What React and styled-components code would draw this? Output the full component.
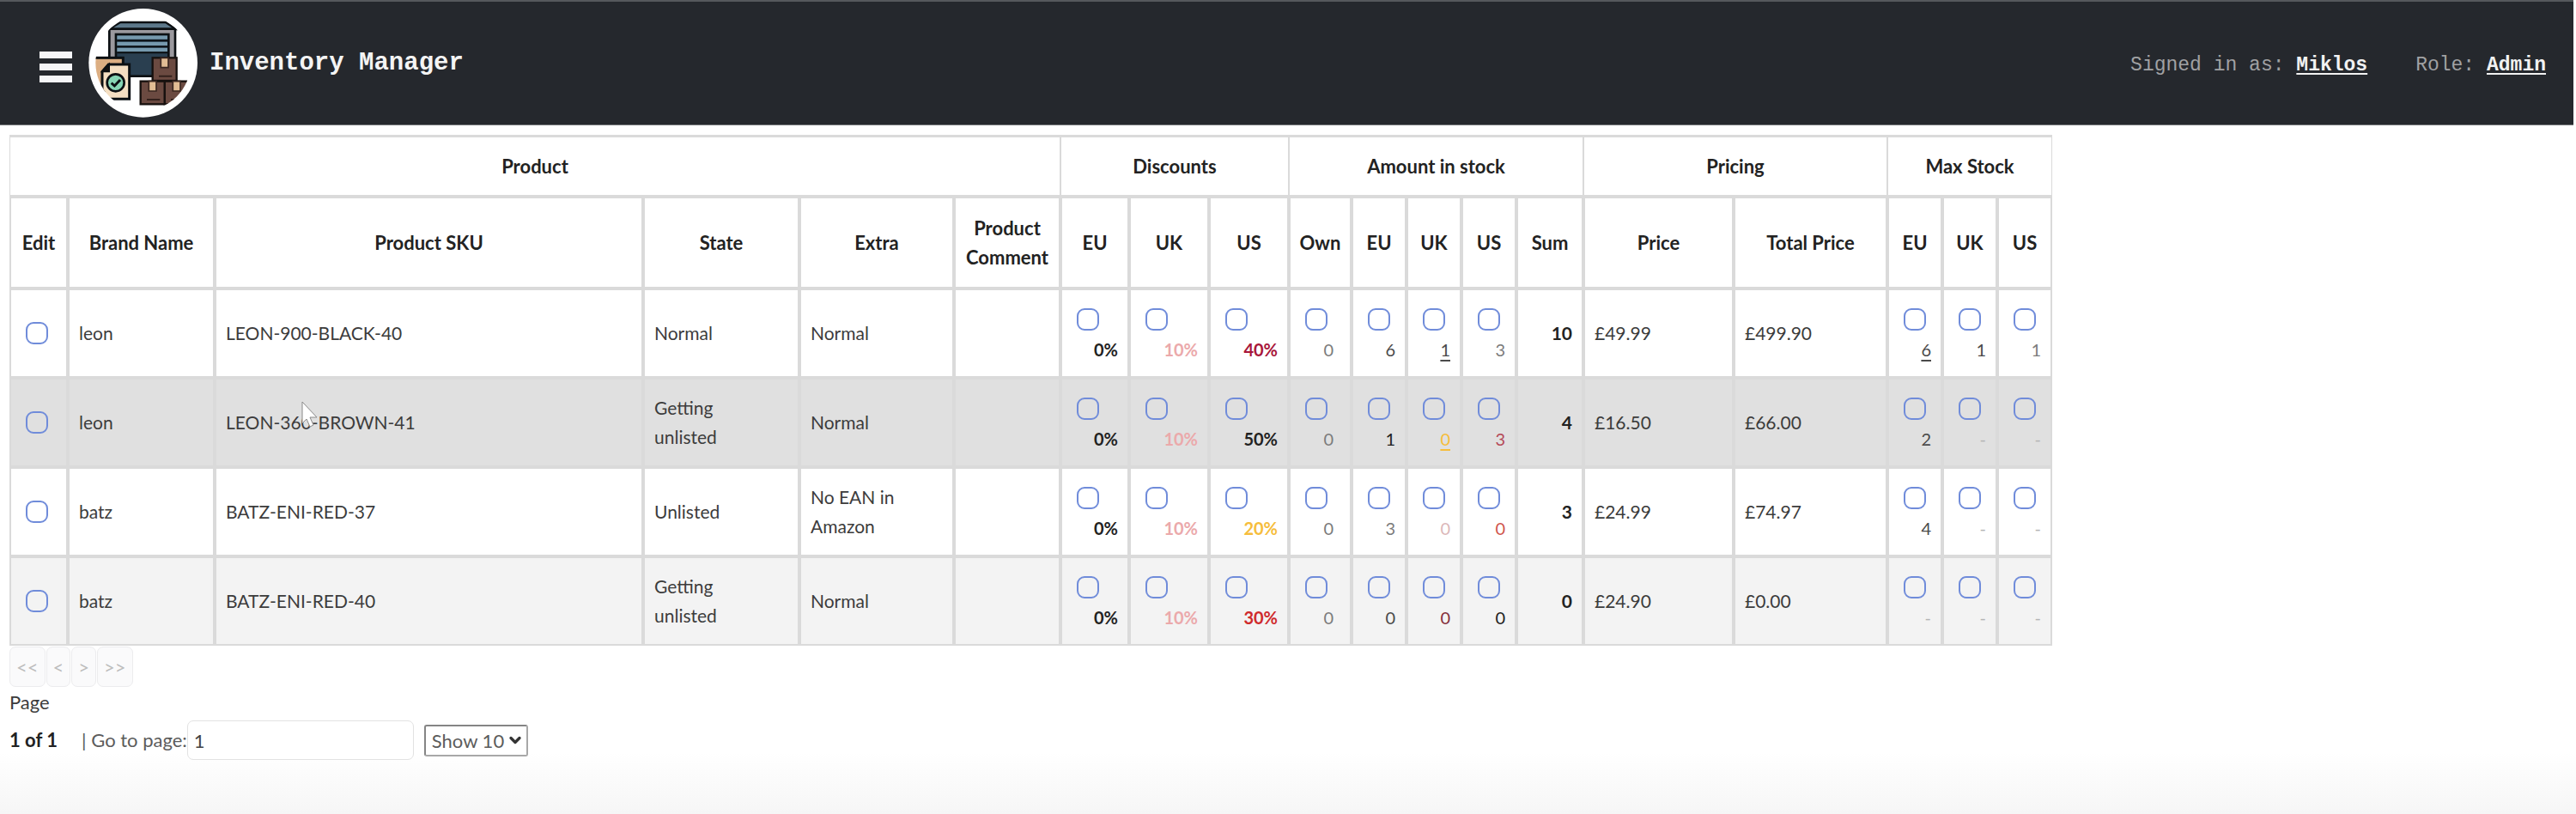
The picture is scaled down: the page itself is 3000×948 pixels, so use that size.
import React from "react";
import styled, { createGlobalStyle, css } from "styled-components";
import { ChevronDown } from "lucide-react";

const LINE = "#dadada";

const GlobalStyle = createGlobalStyle`
  *, *::before, *::after { box-sizing: border-box; }
  body {
    margin: 0;
    color: #3c3c3c;
    font-family: Lato, "Liberation Sans", sans-serif;
    font-size: 22px;
    line-height: 34px;
  }
`;

const Page = styled.div`
  min-height: 100vh;
  background: linear-gradient(to top, #f6f6f6 0, #fff 72px);
`;

const Header = styled.header`
  display: flex;
  align-items: center;
  height: 146px;
  margin-right: 3px;
  padding: 0 32px 0 46px;
  background: #25282d;
  border-top: 2px solid #55585c;
  border-bottom: 1px solid #77797c;
  font-family: "Liberation Mono", monospace;
`;

const MenuButton = styled.button`
  display: grid;
  gap: 6px;
  width: 38px;
  margin-top: 8px;
  padding: 0;
  border: 0;
  background: none;
`;

const MenuBar = styled.span`
  height: 8px;
  background: #f6f6f8;
`;

const Brand = styled.h1`
  display: flex;
  align-items: center;
  gap: 14px;
  margin: 0 auto 0 19px;
  color: #f4f4f4;
  font-size: 29px;
  font-weight: 700;
`;

const Session = styled.div`
  display: flex;
  gap: 56px;
  margin-top: 4px;
  color: #a0a1a3;
  font-size: 23px;
`;

const SessionLink = styled.a`
  color: #f2f2f2;
  font-weight: 700;
  text-decoration: underline;
  text-decoration-thickness: 2px;
  text-underline-offset: 3px;
`;

const Content = styled.main`
  padding: 11px 11px 0;
`;

const Table = styled.table`
  width: max-content;
  table-layout: fixed;
  border-collapse: separate;
  border-spacing: 0;
  border-top: 1px solid ${LINE};
  font-size: 21px;
`;

const Col = styled.col`
  width: ${(p) => p.$w}px;
`;

const HeadCell = styled.th`
  height: ${(p) => (p.$group ? 71 : 107)}px;
  padding: 0 4px;
  border: 2px solid ${LINE};
  ${(p) => p.$group && css`border-left-width: 1px; border-right-width: 1px;`}
  color: #222;
  font-size: 22px;
  font-weight: 700;
`;

const Row = styled.tr`
  background: ${(p) => ({ hover: "#e0e0e0", even: "#f3f3f3" })[p.$tone] || "#fff"};
`;

const Cell = styled.td`
  position: relative;
  height: 104px;
  padding: 0 11px;
  border: 2px solid ${LINE};
  white-space: pre-line;
`;

const SumCell = styled(Cell)`
  color: #222;
  font-weight: 700;
  text-align: right;
`;

const Check = styled.input.attrs({ type: "checkbox" })`
  appearance: none;
  display: block;
  width: 26px;
  height: 26px;
  margin: 0 6px;
  border: 2px solid #708cda;
  border-radius: 9px;
`;

const Figure = styled.div`
  display: grid;
  gap: 8px;
  padding: 4px 0 0;
`;

const Value = styled.span`
  padding-right: ${(p) => (p.$inset ? 8 : 0)}px;
  color: ${(p) => p.$color};
  font-size: 20px;
  font-weight: ${(p) => (p.$bold ? 700 : 400)};
  line-height: 28px;
  text-align: right;
  text-decoration: ${(p) => (p.$under ? "underline" : "none")};
  text-underline-offset: 4px;
`;

const Pointer = styled.svg`
  position: absolute;
  left: 99px;
  top: 25px;
  width: 20px;
  height: 32px;
`;

const Pager = styled.nav`
  display: flex;
  gap: 1px;
  padding: 1px 0;
`;

const PagerButton = styled.button`
  height: 47px;
  padding: 0 7px;
  border: 1px solid #ececee;
  border-radius: 7px;
  background: #fafafb;
  color: #bdbdbd;
  font: inherit;
`;

const PageLine = styled.div`
  display: flex;
  align-items: center;
  padding-top: 4px;
`;

const PageCount = styled.strong`
  margin-right: 28px;
  color: #222;
`;

const PageLabel = styled.label`
  display: flex;
  align-items: center;
  color: #5c5c5c;
`;

const PageInput = styled.input`
  width: 264px;
  height: 46px;
  margin-right: 12px;
  padding: 0 7px;
  border: 1px solid #e2e2e2;
  border-radius: 7px;
  background: #fff;
  color: #444;
  font: inherit;
`;

const SelectBox = styled.div`
  display: grid;
  align-items: center;
  > * { grid-area: 1 / 1; }
  > svg { justify-self: end; margin-right: 5px; pointer-events: none; }
`;

const Select = styled.select`
  appearance: none;
  width: 121px;
  height: 37px;
  padding: 0 7px;
  border: 2px solid #858585;
  border-right-color: #a8a8a8;
  border-bottom-color: #a8a8a8;
  border-radius: 3px;
  background: #fff;
  color: #5c5c5c;
  font: inherit;
`;

function Box({ x, y }) {
  return (
    <g stroke="#17110f" strokeWidth="7">
      <rect x={x} y={y} width="84" height="80" fill="#6b4a41" />
      <path d={`M${x + 29} ${y}v34h26v-34z`} fill="#e2bd94" stroke="#3a2721" strokeWidth="5" />
      <path d={`M${x + 22} ${y + 64}h46`} stroke="#33211c" strokeWidth="6" />
    </g>
  );
}

function Logo() {
  return (
    <svg width="127" height="127" viewBox="40 30 381 381" aria-hidden="true">
      <defs>
        <clipPath id="badge"><circle cx="231" cy="220" r="166" /></clipPath>
      </defs>
      <circle cx="231" cy="220" r="190" fill="#fff" />
      <g clipPath="url(#badge)" stroke="#0c1013">
        <path d="M110 102L150 78H310L346 102z" fill="#5c788a" strokeWidth="8" />
        <rect x="113" y="101" width="230" height="165" fill="#9b999e" strokeWidth="8" />
        <rect x="136" y="120" width="184" height="146" fill="#2a3f50" strokeWidth="8" />
        <path d="M140 131H316M140 153H316M140 174H316" stroke="#7699ad" strokeWidth="13" />
        <path d="M140 142H316M140 163H316M140 184H316" strokeWidth="6" />
        <rect x="50" y="202" width="111" height="115" fill="#dcae82" strokeWidth="9" />
        <path d="M110 225H183V346H88V250z" fill="#f5dfc2" strokeWidth="9" />
        <path d="M112 225V250H88z" fill="#17110f" strokeWidth="6" />
        <circle cx="135" cy="289" r="30" fill="#86d5b4" strokeWidth="8" />
        <path d="M120 290L131 300L151 279" fill="none" strokeWidth="9" />
        <Box x={264} y={202} />
        <Box x={306} y={284} />
        <Box x={222} y={284} />
      </g>
    </svg>
  );
}

const WIDTHS = [68, 171, 499, 182, 180, 124, 80, 93, 93, 73, 64, 64, 63, 78, 175, 179, 64, 64, 63];

const GROUPS = [
  ["Product", 6],
  ["Discounts", 3],
  ["Amount in stock", 5],
  ["Pricing", 2],
  ["Max Stock", 3],
];

const COLUMNS = [
  "Edit", "Brand Name", "Product SKU", "State", "Extra", "Product Comment",
  "EU", "UK", "US", "Own", "EU", "UK", "US", "Sum", "Price", "Total Price", "EU", "UK", "US",
];

const INK = "#222";
const GREY = "#7c7c7c";
const DARK = "#4a4a4a";
const FAINT = "#b4b4b4";
const PINK = "#eba9ab";
const AMBER = "#f6bd3c";

const v = (text, color, under = false) => ({ text, color, under });

const ROWS = [
  {
    brand: "leon", sku: "LEON-900-BLACK-40", state: "Normal", extra: "Normal",
    discounts: [v("0%", INK), v("10%", PINK), v("40%", "#a8163a")],
    stock: [v("0", GREY), v("6", DARK), v("1", DARK, true), v("3", GREY)],
    sum: 10, price: "£49.99", total: "£499.90",
    max: [v("6", DARK, true), v("1", DARK), v("1", GREY)],
  },
  {
    brand: "leon", sku: "LEON-360-BROWN-41", state: "Getting\nunlisted", extra: "Normal", tone: "hover",
    discounts: [v("0%", INK), v("10%", PINK), v("50%", INK)],
    stock: [v("0", GREY), v("1", INK), v("0", AMBER, true), v("3", "#b54a58")],
    sum: 4, price: "£16.50", total: "£66.00",
    max: [v("2", DARK), v("-", FAINT), v("-", FAINT)],
  },
  {
    brand: "batz", sku: "BATZ-ENI-RED-37", state: "Unlisted", extra: "No EAN in\nAmazon",
    discounts: [v("0%", INK), v("10%", PINK), v("20%", AMBER)],
    stock: [v("0", GREY), v("3", GREY), v("0", "#dcb8ba"), v("0", "#d0564e")],
    sum: 3, price: "£24.99", total: "£74.97",
    max: [v("4", DARK), v("-", FAINT), v("-", FAINT)],
  },
  {
    brand: "batz", sku: "BATZ-ENI-RED-40", state: "Getting\nunlisted", extra: "Normal", tone: "even",
    discounts: [v("0%", INK), v("10%", PINK), v("30%", "#cf2a2c")],
    stock: [v("0", GREY), v("0", DARK), v("0", "#86303c"), v("0", INK)],
    sum: 0, price: "£24.90", total: "£0.00",
    max: [v("-", FAINT), v("-", FAINT), v("-", FAINT)],
  },
];

function FigureCell({ item, label, bold, inset }) {
  return (
    <Cell>
      <Figure>
        <Check aria-label={label} />
        <Value $color={item.color} $under={item.under} $bold={bold} $inset={inset}>{item.text}</Value>
      </Figure>
    </Cell>
  );
}

function ProductRow({ row }) {
  return (
    <Row $tone={row.tone}>
      <Cell><Check aria-label={`Edit ${row.sku}`} /></Cell>
      <Cell>{row.brand}</Cell>
      <Cell>
        {row.sku}
        {row.tone === "hover" && (
          <Pointer viewBox="0 0 20 32" aria-hidden="true">
            <path d="M1 1V26L6 21L10 30L14 28L10 19H18z" fill="#fff" stroke="#8a8a8a" />
          </Pointer>
        )}
      </Cell>
      <Cell>{row.state}</Cell>
      <Cell>{row.extra}</Cell>
      <Cell />
      {row.discounts.map((d, i) => <FigureCell key={i} item={d} bold label={`Discount ${i + 1}, ${row.sku}`} />)}
      {row.stock.map((s, i) => <FigureCell key={i} item={s} inset={i === 0} label={`Stock ${i + 1}, ${row.sku}`} />)}
      <SumCell>{row.sum}</SumCell>
      <Cell>{row.price}</Cell>
      <Cell>{row.total}</Cell>
      {row.max.map((m, i) => <FigureCell key={i} item={m} label={`Max stock ${i + 1}, ${row.sku}`} />)}
    </Row>
  );
}

export default function App() {
  return (
    <Page>
      <GlobalStyle />
      <Header>
        <MenuButton type="button" aria-label="Menu"><MenuBar /><MenuBar /><MenuBar /></MenuButton>
        <Brand><Logo />Inventory Manager</Brand>
        <Session>
          <span>Signed in as: <SessionLink href="#user">Miklos</SessionLink></span>
          <span>Role: <SessionLink href="#role">Admin</SessionLink></span>
        </Session>
      </Header>
      <Content>
        <Table>
          <colgroup>{WIDTHS.map((w, i) => <Col key={i} $w={w} />)}</colgroup>
          <thead>
            <tr>{GROUPS.map(([name, span]) => <HeadCell key={name} colSpan={span} $group>{name}</HeadCell>)}</tr>
            <tr>{COLUMNS.map((name, i) => <HeadCell key={i}>{name}</HeadCell>)}</tr>
          </thead>
          <tbody>{ROWS.map((row) => <ProductRow key={row.sku} row={row} />)}</tbody>
        </Table>
        <Pager aria-label="Pages">
          {["<<", "<", ">", ">>"].map((s) => <PagerButton key={s} type="button" disabled>{s}</PagerButton>)}
        </Pager>
        <div>Page</div>
        <PageLine>
          <PageCount>1 of 1</PageCount>
          <PageLabel>| Go to page:<PageInput type="text" defaultValue="1" /></PageLabel>
          <SelectBox>
            <Select aria-label="Rows per page" defaultValue="10">
              <option value="10">Show 10</option>
              <option value="20">Show 20</option>
            </Select>
            <ChevronDown size={20} strokeWidth={4} color="#333" />
          </SelectBox>
        </PageLine>
      </Content>
    </Page>
  );
}
